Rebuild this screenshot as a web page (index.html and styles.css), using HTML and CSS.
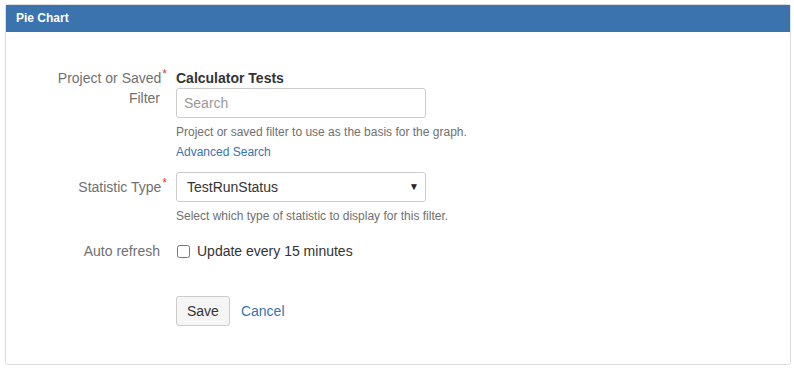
FILE: index.html
```html
<!DOCTYPE html>
<html lang="en">
<head>
    <meta charset="UTF-8">
    <title>Pie Chart</title>
    <link rel="stylesheet" href="styles.css">
</head>
<body>
    <div class="panel">
        <div class="panel-header">Pie Chart</div>
        <form class="gadget-form">
            <div class="field-group">
                <label class="field-label">Project or Saved<span class="req">*</span> Filter</label>
                <div class="field">
                    <div class="selected-project">Calculator Tests</div>
                    <input type="text" class="text-input" placeholder="Search">
                    <div class="description">Project or saved filter to use as the basis for the graph.</div>
                    <a href="#" class="link">Advanced Search</a>
                </div>
            </div>
            <div class="field-group">
                <label class="field-label label-pad">Statistic Type<span class="req">*</span></label>
                <div class="field">
                    <div class="select-wrap">
                        <select class="select-input">
                            <option>TestRunStatus</option>
                        </select>
                        <span class="select-arrow">&#9660;</span>
                    </div>
                    <div class="description">Select which type of statistic to display for this filter.</div>
                </div>
            </div>
            <div class="field-group">
                <label class="field-label label-pad">Auto refresh</label>
                <div class="field">
                    <label class="checkbox-row"><input type="checkbox" class="checkbox"> Update every 15 minutes</label>
                </div>
            </div>
            <div class="buttons">
                <button type="button" class="button">Save</button>
                <a href="#" class="link cancel">Cancel</a>
            </div>
        </form>
    </div>
</body>
</html>
```

FILE: styles.css
```css
body {
    font-family: "Liberation Sans", Arial, sans-serif;
    font-size: 14px;
    color: #333;
    background-color: #fff;
    margin: 0;
    padding: 4px 3px 0 5px;
}

.panel {
    border: 1px solid #ddd;
    border-radius: 3px;
    height: 359px;
}

.panel-header {
    background-color: #3b73af;
    color: #fff;
    font-size: 12px;
    font-weight: bold;
    height: 27px;
    line-height: 27px;
    padding-left: 10px;
}

.gadget-form {
    padding: 36px 0 0 44px;
}

.field-group {
    display: grid;
    grid-template-columns: 110px 1fr;
    column-gap: 16px;
    margin-bottom: 10px;
}

.field-label {
    color: #707070;
    text-align: right;
    line-height: 20px;
}

.label-pad {
    padding-top: 5px;
}

.req {
    color: #d04437;
    font-size: 12px;
    vertical-align: top;
    line-height: 12px;
    margin-right: -7px;
    margin-left: 1px;
}

.selected-project {
    font-weight: bold;
    line-height: 20px;
}

.text-input,
.select-input {
    display: block;
    box-sizing: border-box;
    width: 250px;
    height: 30px;
    border: 1px solid #ccc;
    border-radius: 3px;
    font-family: inherit;
    font-size: 14px;
    color: #333;
    background-color: #fff;
    margin: 0;
}

.text-input {
    padding: 0 7px;
}

.text-input::placeholder {
    color: #999;
}

.select-wrap {
    position: relative;
    width: 250px;
}

.select-input {
    appearance: none;
    -webkit-appearance: none;
    padding: 0 10px;
}

.select-arrow {
    position: absolute;
    right: 7px;
    top: 9px;
    font-size: 10px;
    color: #222;
    pointer-events: none;
}

.description {
    color: #707070;
    font-size: 12px;
    line-height: 20px;
    margin-top: 4px;
}

.link {
    color: #3b73af;
    text-decoration: none;
    font-size: 12px;
    line-height: 20px;
    display: inline-block;
}

.checkbox-row {
    display: flex;
    align-items: center;
    line-height: 20px;
    color: #333;
    padding-top: 5px;
}

.checkbox {
    width: 13px;
    height: 13px;
    margin: 0 7px 0 1px;
}

.buttons {
    display: flex;
    align-items: center;
    padding-left: 126px;
    margin-top: 35px;
}

.button {
    font-family: inherit;
    font-size: 14px;
    color: #333;
    background-color: #f5f5f5;
    border: 1px solid #ccc;
    border-radius: 3px;
    height: 30px;
    padding: 0 10px;
    cursor: pointer;
}

.cancel {
    font-size: 14px;
    margin-left: 11px;
}
```
